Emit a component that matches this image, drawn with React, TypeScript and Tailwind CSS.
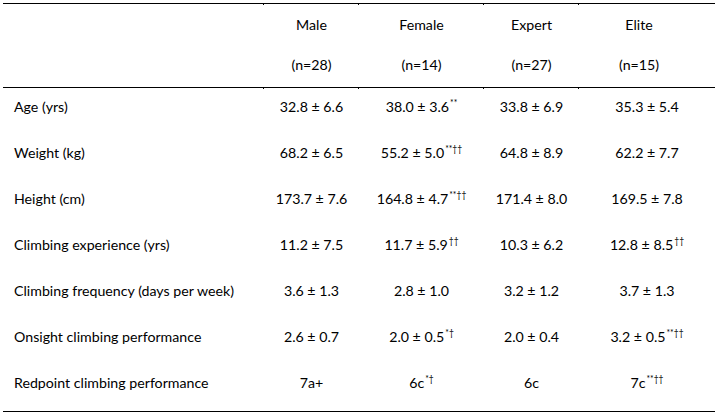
import React from "react";

type Cell = { v: string; sup?: string };

const groups = [
  { name: "Male", n: "(n=28)" },
  { name: "Female", n: "(n=14)" },
  { name: "Expert", n: "(n=27)" },
  { name: "Elite", n: "(n=15)" },
];

const rows: { label: string; cells: Cell[] }[] = [
  {
    label: "Age (yrs)",
    cells: [{ v: "32.8 ± 6.6" }, { v: "38.0 ± 3.6", sup: "**" }, { v: "33.8 ± 6.9" }, { v: "35.3 ± 5.4" }],
  },
  {
    label: "Weight (kg)",
    cells: [{ v: "68.2 ± 6.5" }, { v: "55.2 ± 5.0", sup: "**††" }, { v: "64.8 ± 8.9" }, { v: "62.2 ± 7.7" }],
  },
  {
    label: "Height (cm)",
    cells: [{ v: "173.7 ± 7.6" }, { v: "164.8 ± 4.7", sup: "**††" }, { v: "171.4 ± 8.0" }, { v: "169.5 ± 7.8" }],
  },
  {
    label: "Climbing experience (yrs)",
    cells: [{ v: "11.2 ± 7.5" }, { v: "11.7 ± 5.9", sup: "††" }, { v: "10.3 ± 6.2" }, { v: "12.8 ± 8.5", sup: "††" }],
  },
  {
    label: "Climbing frequency (days per week)",
    cells: [{ v: "3.6 ± 1.3" }, { v: "2.8 ± 1.0" }, { v: "3.2 ± 1.2" }, { v: "3.7 ± 1.3" }],
  },
  {
    label: "Onsight climbing performance",
    cells: [{ v: "2.6 ± 0.7" }, { v: "2.0 ± 0.5", sup: "*†" }, { v: "2.0 ± 0.4" }, { v: "3.2 ± 0.5", sup: "**††" }],
  },
  {
    label: "Redpoint climbing performance",
    cells: [{ v: "7a+" }, { v: "6c", sup: "*†" }, { v: "6c" }, { v: "7c", sup: "**††" }],
  },
];

const cols = "grid grid-cols-[261px_95px_125px_95px_136px]";

// small vertical marks that hang under the rules at the column boundaries
const Ticks = () => (
  <div className={`${cols} h-px`}>
    <div className="border-r border-black" />
    <div className="border-r border-black" />
    <div className="border-r border-black" />
    <div className="border-r border-black" />
    <div />
  </div>
);

const Value = ({ c }: { c: Cell }) => (
  <span>
    {c.v}
    {c.sup && <sup className="text-[8.5px] leading-none relative -top-[6px] ml-px">{c.sup}</sup>}
  </span>
);

export default function App() {
  return (
    <div
      className="w-[720px] h-[416px] bg-white text-black pt-[3px] pl-[3px] text-[14.2px] leading-[20px]"
      style={{ fontFamily: "Lato, 'Open Sans', sans-serif" }}
    >
      <div className="w-[712px]">
        {/* TOP RULE */}
        <div className="border-t border-black" />
        <Ticks />

        {/* HEADER */}
        <div className={`${cols} pt-[10px] pb-[12px]`}>
          <div />
          {groups.map((g, i) => (
            <div key={g.name} className={`flex flex-col items-center gap-[20px] ${i === 3 ? "pr-4" : ""}`}>
              <span>{g.name}</span>
              <span>{g.n}</span>
            </div>
          ))}
        </div>

        <div className="border-t border-black" />
        <Ticks />

        {/* BODY */}
        {rows.map((r) => (
          <div key={r.label} className={`${cols} h-[46px] pt-[8px]`}>
            <div className="pl-[11px]">{r.label}</div>
            {r.cells.map((c, i) => (
              <div key={i} className="text-center">
                <Value c={c} />
              </div>
            ))}
          </div>
        ))}

        {/* BOTTOM RULE */}
        <div className="border-t border-black" />
      </div>
    </div>
  );
}
